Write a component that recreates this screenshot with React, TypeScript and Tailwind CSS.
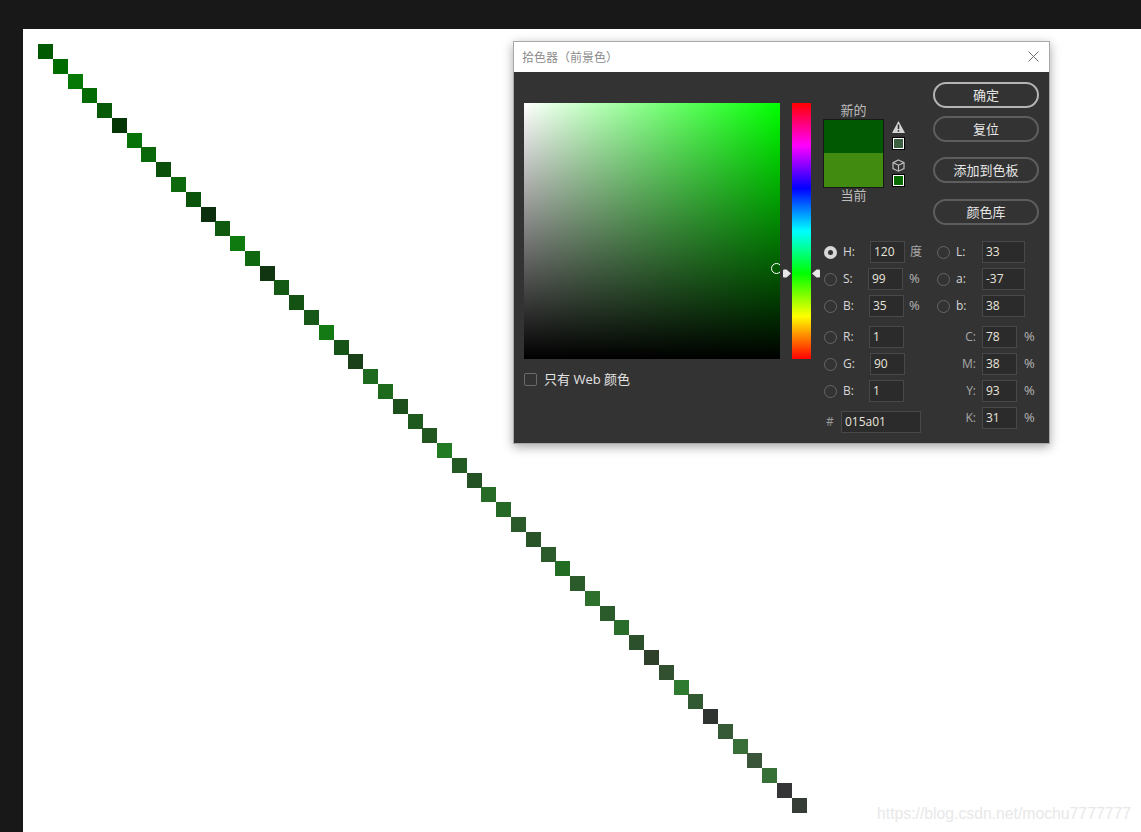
const squareColors = [
  "#015a01", "#006c00", "#057805", "#046a04", "#085a08", "#043504", "#077207", "#0a680a",
  "#0a4f0a", "#0e680e", "#0b540b", "#0c2f0e", "#105a10", "#0f7a0f", "#0f680f", "#113411",
  "#145a14", "#135213", "#175717", "#147a14", "#165316", "#1a401a", "#1d691d", "#1d6a1d",
  "#1d4f1d", "#1e5a1e", "#215621", "#227a22", "#235a23", "#255225", "#266c26", "#266926",
  "#2a5a2a", "#285428", "#2b5a2b", "#236c23", "#2b5a2b", "#2c702c", "#2b5a2b", "#2a6c2a",
  "#2c4f2c", "#2e402a", "#305030", "#2e7a2e", "#325a32", "#303431", "#355a35", "#386f38",
  "#3a553a", "#367036", "#353538", "#363d36",
];

const cjk = "font-['Open_Sans','Noto_Sans_CJK_SC',sans-serif]";

function Radio({ checked }: { checked?: boolean }) {
  if (checked) {
    return (
      <span className="flex h-[13px] w-[13px] shrink-0 items-center justify-center rounded-full bg-[#d8d8d8]">
        <span className="h-[5px] w-[5px] rounded-full bg-[#333333]" />
      </span>
    );
  }
  return <span className="h-[13px] w-[13px] shrink-0 rounded-full border border-[#666666]" />;
}

function Box({ value, className }: { value: string; className: string }) {
  return (
    <div
      className={`flex h-[22px] shrink-0 items-center border border-[#484848] bg-[#2b2b2b] pl-[3px] text-[12px] text-[#e8e4dc] ${className}`}
    >
      {value}
    </div>
  );
}

function Pill({ label, strong, className }: { label: string; strong?: boolean; className?: string }) {
  return (
    <div
      className={`flex h-[26px] w-[106px] items-center justify-center rounded-full border-2 pt-px text-[13px] text-[#e6e6e6] ${
        strong ? "border-[#b4b4b4]" : "border-[#5e5e5e]"
      } ${className ?? ""}`}
    >
      {label}
    </div>
  );
}

function MiniSwatch({ color }: { color: string }) {
  return <div className={`h-[11px] w-[11px] border border-white ring-1 ring-black ${color}`} />;
}

function WarningIcon() {
  return (
    <svg width="13" height="12" viewBox="0 0 13 12">
      <path d="M6.5 0 L13 12 H0 Z" fill="#d4d4d4" />
      <rect x="5.7" y="3.5" width="1.6" height="4.5" fill="#333333" />
      <rect x="5.7" y="9" width="1.6" height="1.6" fill="#333333" />
    </svg>
  );
}

function CubeIcon() {
  return (
    <svg width="13" height="13" viewBox="0 0 13 13" fill="none" stroke="#bdbdbd" strokeWidth="1.2">
      <path d="M6.5 1 L12 3.6 V9.6 L6.5 12.2 L1 9.6 V3.6 Z" />
      <path d="M1 3.6 L6.5 6.2 L12 3.6 M6.5 6.2 V12.2" />
    </svg>
  );
}

function SliderArrow({ flip }: { flip?: boolean }) {
  return (
    <svg width="8" height="9" viewBox="0 0 8 9" className={flip ? "-scale-x-100" : ""}>
      <path d="M0 1.5 Q0 0.5 1 0.5 H3.5 L8 4.5 L3.5 8.5 H1 Q0 8.5 0 7.5 Z" fill="#e8e8e8" />
    </svg>
  );
}

function PickerDialog() {
  return (
    <div
      className={`absolute left-[490px] top-[12px] flex h-[403px] w-[537px] flex-col border border-[#a8a8a8] bg-[#333333] shadow-[0_3px_10px_rgba(0,0,0,0.35)] ${cjk}`}
    >
      <div className="flex h-[30px] shrink-0 items-center justify-between bg-white pl-[8px] pr-[10px]">
        <span className="pt-[2px] text-[12px] text-[#8c8c8c]">拾色器（前景色）</span>
        <svg width="11" height="11" viewBox="0 0 11 11" stroke="#6f6f6f" strokeWidth="1" className="-mt-[2px]">
          <path d="M0.5 0.5 L10.5 10.5 M10.5 0.5 L0.5 10.5" />
        </svg>
      </div>

      <div className="flex flex-1 pl-[10px]">
        <div className="w-[256px] pt-[31px]">
          <div className="relative h-[256px] w-[256px] overflow-hidden bg-linear-to-r/srgb from-white to-[#00ff00]">
            <div className="h-full w-full bg-linear-to-t/srgb from-black to-transparent" />
            <div className="absolute left-[247px] top-[160px] h-[11px] w-[11px] rounded-full border border-white" />
          </div>
          <div className="mt-[13px] flex items-center">
            <span className="h-[13px] w-[13px] rounded-[2px] border border-[#6a6a6a]" />
            <span className="ml-[7px] text-[13px] leading-[15px] text-[#e4e4e4]">只有 Web 颜色</span>
          </div>
        </div>

        <div className="relative ml-[12px] mt-[31px] h-[256px] w-[19px] bg-[linear-gradient(to_bottom,#ff0000,#ff00ff,#0000ff,#00ffff,#00ff00,#ffff00,#ff0000)]">
          <div className="absolute -left-[9px] top-[166px] flex w-[37px] justify-between">
            <SliderArrow />
            <SliderArrow flip />
          </div>
        </div>

        <div className="ml-[12px] flex w-[216px] flex-col pt-[11px]">
          <div className="flex h-[158px]">
            <div className="flex w-[61px] flex-col items-center pt-[19px] text-[13px] text-[#bdbdbd]">
              <div className="h-[17px] leading-[17px]">新的</div>
              <div className="h-[69px] w-[61px] shrink-0 border border-[#151a14]">
                <div className="h-[33px] bg-[#015a01]" />
                <div className="h-[34px] bg-[#408b10]" />
              </div>
              <div className="-mt-px h-[17px] leading-[17px]">当前</div>
            </div>
            <div className="ml-[8px] flex w-[13px] flex-col items-center pt-[38px]">
              <WarningIcon />
              <div className="mt-[5px]">
                <MiniSwatch color="bg-[#3d6140]" />
              </div>
              <div className="mt-[10px]">
                <CubeIcon />
              </div>
              <div className="mt-[3px]">
                <MiniSwatch color="bg-[#0a6a02]" />
              </div>
            </div>
            <div className="-mt-px ml-[28px] flex flex-col">
              <Pill label="确定" strong />
              <Pill label="复位" className="mt-[8px]" />
              <Pill label="添加到色板" className="mt-[15px]" />
              <Pill label="颜色库" className="mt-[16px]" />
            </div>
          </div>

          <div className="flex text-[12px] text-[#d6d6d6]">
            <div className="flex w-[113px] flex-col">
              <div className="flex h-[22px] items-center pl-px">
                <Radio checked />
                <span className="ml-[6px] w-[27px]">H:</span>
                <Box value="120" className="w-[35px]" />
                <span className="ml-[5px] text-[#a8a8a8]">度</span>
              </div>
              <div className="mt-[5px] flex h-[22px] items-center pl-px">
                <Radio />
                <span className="ml-[6px] w-[25px]">S:</span>
                <Box value="99" className="w-[35px]" />
                <span className="ml-[6px] text-[13px] text-[#b5b5b5]">%</span>
              </div>
              <div className="mt-[5px] flex h-[22px] items-center pl-px">
                <Radio />
                <span className="ml-[6px] w-[26px]">B:</span>
                <Box value="35" className="w-[35px]" />
                <span className="ml-[5px] text-[13px] text-[#b5b5b5]">%</span>
              </div>
              <div className="mt-[9px] flex h-[22px] items-center pl-px">
                <Radio />
                <span className="ml-[6px] w-[26px]">R:</span>
                <Box value="1" className="w-[35px]" />
              </div>
              <div className="mt-[5px] flex h-[22px] items-center pl-px">
                <Radio />
                <span className="ml-[6px] w-[27px]">G:</span>
                <Box value="90" className="w-[35px]" />
              </div>
              <div className="mt-[5px] flex h-[22px] items-center pl-px">
                <Radio />
                <span className="ml-[6px] w-[26px]">B:</span>
                <Box value="1" className="w-[35px]" />
              </div>
              <div className="mt-[9px] flex h-[22px] items-center pl-[3px]">
                <span className="w-[15px] text-[#9a9a9a]">#</span>
                <Box value="015a01" className="w-[80px]" />
              </div>
            </div>

            <div className="flex flex-col pl-px">
              <div className="flex h-[22px] items-center">
                <Radio />
                <span className="ml-[6px] w-[26px]">L:</span>
                <Box value="33" className="w-[43px]" />
              </div>
              <div className="mt-[5px] flex h-[22px] items-center">
                <Radio />
                <span className="ml-[6px] w-[26px]">a:</span>
                <Box value="-37" className="w-[43px]" />
              </div>
              <div className="mt-[5px] flex h-[22px] items-center">
                <Radio />
                <span className="ml-[6px] w-[26px]">b:</span>
                <Box value="38" className="w-[43px]" />
              </div>
              <div className="mt-[9px] flex h-[22px] items-center">
                <span className="w-[45px] pr-[6px] text-right text-[#a8a8a8]">C:</span>
                <Box value="78" className="w-[35px]" />
                <span className="ml-[7px] text-[13px] text-[#b5b5b5]">%</span>
              </div>
              <div className="mt-[5px] flex h-[22px] items-center">
                <span className="w-[45px] pr-[6px] text-right text-[#a8a8a8]">M:</span>
                <Box value="38" className="w-[35px]" />
                <span className="ml-[7px] text-[13px] text-[#b5b5b5]">%</span>
              </div>
              <div className="mt-[5px] flex h-[22px] items-center">
                <span className="w-[45px] pr-[6px] text-right text-[#a8a8a8]">Y:</span>
                <Box value="93" className="w-[35px]" />
                <span className="ml-[7px] text-[13px] text-[#b5b5b5]">%</span>
              </div>
              <div className="mt-[5px] flex h-[22px] items-center">
                <span className="w-[45px] pr-[6px] text-right text-[#a8a8a8]">K:</span>
                <Box value="31" className="w-[35px]" />
                <span className="ml-[7px] text-[13px] text-[#b5b5b5]">%</span>
              </div>
            </div>
          </div>
        </div>
      </div>
    </div>
  );
}

export default function App() {
  return (
    <div className="flex h-[832px] w-[1141px] overflow-hidden bg-[#181818] pl-[23px] pt-[29px]">
      <div className="relative flex-1 bg-white">
        {squareColors.map((color, i) => (
          <div
            key={i}
            className="absolute h-[15px] w-[15px]"
            style={{
              left: Math.round(15 + i * 14.78),
              top: Math.round(15 + i * 14.78),
              backgroundColor: color,
            }}
          />
        ))}
        <PickerDialog />
        <span className="absolute left-[854px] top-[774px] whitespace-nowrap font-['Liberation_Sans',sans-serif] text-[15.75px] leading-[22px] text-[#e8e8e8]">
          https://blog.csdn.net/mochu7777777
        </span>
      </div>
    </div>
  );
}
